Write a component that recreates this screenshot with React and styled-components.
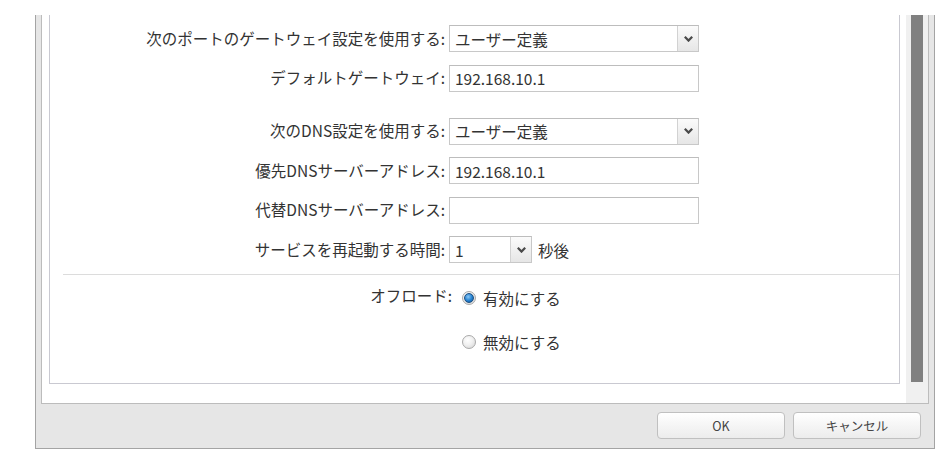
import React from 'react';
import styled, { createGlobalStyle } from 'styled-components';

const Global = createGlobalStyle`
  html, body { margin: 0; padding: 0; background: #ffffff; }
  body { font-family: "Noto Sans CJK JP", "Noto Sans", sans-serif; color: #333333; }
  * { box-sizing: border-box; }
`;

const Page = styled.div`
  padding: 15px 0 0 35px;
`;

const Dialog = styled.div`
  width: 900px;
  height: 434px;
  background: #e6e6e6;
  border: 1px solid #a4a4a4;
  border-top: none;
  display: flex;
  flex-direction: column;
`;

const Panel = styled.div`
  margin: 0 5px;
  height: 389px;
  background: #ffffff;
  border: 1px solid #bcbcbc;
  border-top: none;
  display: flex;
`;

const Content = styled.div`
  flex: 1;
  display: flex;
  flex-direction: column;
  padding: 0 6px 19px 7px;
`;

const Box = styled.div`
  flex: 1;
  border: 1px solid #c9c9d1;
  border-top: none;
  padding-top: 10px;
  display: flex;
  flex-direction: column;
`;

const Scrollbar = styled.div`
  width: 22px;
  background: #f0f0f0;
  padding: 0 5px 0 5px;
`;

const Thumb = styled.div`
  height: 367px;
  width: 12px;
  background: #808080;
`;

const Row = styled.div`
  display: flex;
  align-items: center;
  height: 27px;
  margin-top: ${p => p.$gap ?? 12.5}px;
`;

const Label = styled.div`
  width: 395px;
  margin-right: 4px;
  text-align: right;
  font-size: 15.5px;
  line-height: 1;
  white-space: nowrap;
  color: #333333;
`;

const TextInput = styled.input`
  width: 250px;
  height: 27px;
  border: 1px solid #c8c8c8;
  border-top-color: #bdbdbd;
  padding: 0 5px;
  font-family: "Noto Sans CJK JP", "Noto Sans", sans-serif;
  font-size: 15.5px;
  color: #333333;
  background: #ffffff;
  outline: none;
`;

const SelectBox = styled.div`
  width: ${p => p.$w}px;
  height: 27px;
  border: 1px solid #c8c8c8;
  border-top-color: #bdbdbd;
  display: flex;
  background: #ffffff;
`;

const SelectValue = styled.div`
  flex: 1;
  display: flex;
  align-items: center;
  padding: 0 5px;
  font-size: 15.5px;
  color: #333333;
  white-space: nowrap;
`;

const SelectArrow = styled.div`
  width: 21px;
  border-left: 1px solid #d2d2d2;
  background: linear-gradient(#fbfbfb, #e6e6e6);
  display: flex;
  align-items: center;
  justify-content: center;
`;

const Unit = styled.span`
  margin-left: 6px;
  font-size: 15.5px;
  color: #333333;
`;

const Separator = styled.div`
  margin: 10.5px 0 0 13px;
  height: 1px;
  background: #dcdcdc;
`;

const RadioSection = styled.div`
  display: flex;
  align-items: flex-start;
  margin-top: 13px;
`;

const RadioLabel = styled.div`
  width: 402px;
  margin-right: 10px;
  text-align: right;
  font-size: 15.5px;
  line-height: 14px;
  white-space: nowrap;
`;

const RadioGroup = styled.div`
  display: flex;
  flex-direction: column;
  gap: 24px;
`;

const RadioItem = styled.label`
  display: flex;
  align-items: center;
  gap: 7px;
  height: 20px;
  font-size: 15.5px;
  color: #333333;
  white-space: nowrap;
`;

const RadioDot = styled.span`
  flex: none;
  width: 14px;
  height: 14px;
  border-radius: 50%;
  border: 1px solid #a9a9a9;
  background: radial-gradient(circle at 40% 35%, #ffffff 0%, #f0f0f0 45%, #d2d2d2 100%);
  display: flex;
  align-items: center;
  justify-content: center;
  &::after {
    content: "";
    display: ${p => (p.$checked ? 'block' : 'none')};
    flex: none;
    width: 8px;
    height: 8px;
    border-radius: 50%;
    border: 1px solid #1d4f80;
    background: radial-gradient(circle at 40% 35%, #8cc8f4 0%, #2a86d4 50%, #0b4f96 100%);
  }
`;

const Footer = styled.div`
  flex: 1;
  display: flex;
  justify-content: flex-end;
  align-items: flex-start;
  gap: 8px;
  padding: 8px 13px 0 0;
`;

const Button = styled.button`
  width: 128px;
  height: 27px;
  border: 1px solid #c0c0c0;
  border-radius: 4px;
  background: linear-gradient(#ffffff, #ececec);
  font-family: "Noto Sans CJK JP", "Noto Sans", sans-serif;
  font-size: 12.5px;
  color: #444444;
  padding: 0;
`;

const Chevron = () => (
  <svg width="9" height="6" viewBox="0 0 9 6">
    <path d="M0.8 0.8 L4.5 4.6 L8.2 0.8" fill="none" stroke="#4a4a4a" strokeWidth="2.2" />
  </svg>
);

const Select = ({ w, value }) => (
  <SelectBox $w={w}>
    <SelectValue>{value}</SelectValue>
    <SelectArrow><Chevron /></SelectArrow>
  </SelectBox>
);

export default function App() {
  return (
    <>
      <Global />
      <Page>
        <Dialog>
          <Panel>
            <Content>
              <Box>
                <Row $gap={0}>
                  <Label>次のポートのゲートウェイ設定を使用する:</Label>
                  <Select w={250} value="ユーザー定義" />
                </Row>
                <Row>
                  <Label>デフォルトゲートウェイ:</Label>
                  <TextInput readOnly value="192.168.10.1" />
                </Row>
                <Row $gap={26}>
                  <Label>次のDNS設定を使用する:</Label>
                  <Select w={250} value="ユーザー定義" />
                </Row>
                <Row>
                  <Label>優先DNSサーバーアドレス:</Label>
                  <TextInput readOnly value="192.168.10.1" />
                </Row>
                <Row>
                  <Label>代替DNSサーバーアドレス:</Label>
                  <TextInput readOnly value="" />
                </Row>
                <Row>
                  <Label>サービスを再起動する時間:</Label>
                  <Select w={83} value="1" />
                  <Unit>秒後</Unit>
                </Row>
                <Separator />
                <RadioSection>
                  <RadioLabel>オフロード:</RadioLabel>
                  <RadioGroup>
                    <RadioItem><RadioDot $checked />有効にする</RadioItem>
                    <RadioItem><RadioDot />無効にする</RadioItem>
                  </RadioGroup>
                </RadioSection>
              </Box>
            </Content>
            <Scrollbar><Thumb /></Scrollbar>
          </Panel>
          <Footer>
            <Button>OK</Button>
            <Button>キャンセル</Button>
          </Footer>
        </Dialog>
      </Page>
    </>
  );
}
